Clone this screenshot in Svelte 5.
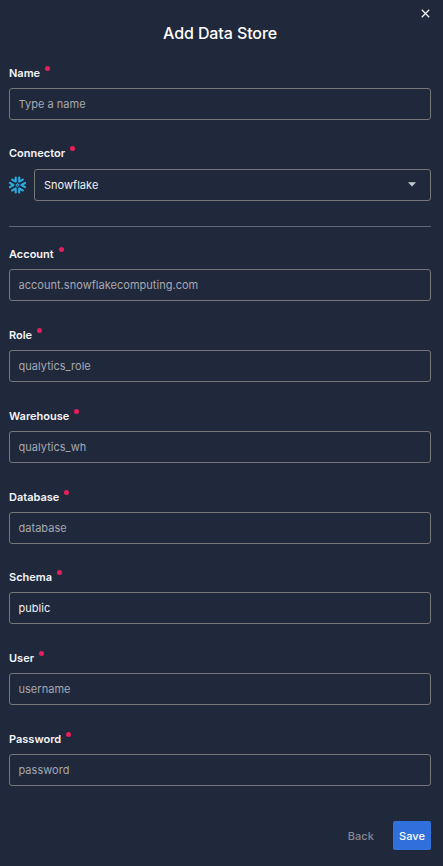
<script>
  const fields = [
    { label: 'Account', placeholder: 'account.snowflakecomputing.com', value: '' },
    { label: 'Role', placeholder: 'qualytics_role', value: '' },
    { label: 'Warehouse', placeholder: 'qualytics_wh', value: '' },
    { label: 'Database', placeholder: 'database', value: '' },
    { label: 'Schema', placeholder: 'schema', value: 'public' },
    { label: 'User', placeholder: 'username', value: '' },
    { label: 'Password', placeholder: 'password', value: '' }
  ];
</script>

{#snippet field(f)}
  <label class="field">
    <span class="label">{f.label}<i class="dot"></i></span>
    <input class="control" type="text" placeholder={f.placeholder} value={f.value} />
  </label>
{/snippet}

<form class="dialog">
  <header>
    <button class="close" type="button" aria-label="Close">
      <svg width="9" height="9" viewBox="0 0 9 9"><path d="M.8.8l7.4 7.4M8.2.8L.8 8.2" stroke="#f4f5f8" stroke-width="1.25" fill="none" /></svg>
    </button>
    <h1>Add Data Store</h1>
  </header>

  {@render field({ label: 'Name', placeholder: 'Type a name', value: '' })}

  <div class="field connector">
    <span class="label">Connector<i class="dot"></i></span>
    <div class="row">
      <svg class="flake" width="17" height="18" viewBox="0 0 44 44">
        <path fill="#29abe2" d="M37.26 33.64 27.94 28.27a2.9 2.9 0 0 0-4.3 2.5V41.3a2.75 2.75 0 0 0 5.5 0V35.6l5.35 3.09a2.9 2.9 0 0 0 2.77-5.05M14.45 22.05a2.9 2.9 0 0 0-1.43-2.5L3.7 14.16a2.87 2.87 0 0 0-3.87 1.07 2.8 2.8 0 0 0 1.03 3.84l5.15 2.95-5.15 2.96a2.8 2.8 0 1 0 2.8 4.9l9.32-5.35a2.9 2.9 0 0 0 1.47-2.48M6.56 10.48l9.32 5.37a2.9 2.9 0 0 0 4.3-2.5V2.8a2.8 2.8 0 0 0-5.6 0V8.5L9.36 5.5a2.86 2.86 0 0 0-2.8 4.98M27.94 15.85l9.32-5.37a2.86 2.86 0 0 0-2.8-4.98L29.14 8.5V2.8a2.75 2.75 0 0 0-5.5 0V13.35a2.9 2.9 0 0 0 4.3 2.5M15.88 28.27 6.56 33.64a2.86 2.86 0 0 0 2.8 4.98L14.58 35.6V41.3a2.8 2.8 0 0 0 5.6 0V30.77a2.9 2.9 0 0 0-4.3-2.5M42.96 25 37.8 22.05 42.96 19.1a2.8 2.8 0 1 0-2.8-4.94L30.82 19.55a2.87 2.87 0 0 0 0 4.98L40.15 29.9A2.84 2.84 0 0 0 42.96 25" />
        <path fill="none" stroke="#29abe2" stroke-width="2.6" stroke-linejoin="round" d="M21.9 18.2 25.8 22.1 21.9 26 18 22.1Z" />
      </svg>
      <button class="control select" type="button">
        <span>Snowflake</span>
        <svg width="8" height="5" viewBox="0 0 8 5"><path d="M0 .3H8L4 4.5Z" fill="#c5c8cf" /></svg>
      </button>
    </div>
  </div>

  <hr />

  {#each fields as f}
    {@render field(f)}
  {/each}

  <footer>
    <button class="back" type="button">Back</button>
    <button class="save" type="button">Save</button>
  </footer>
</form>

<style>
  :global(body) {
    margin: 0;
    background: #20283c;
  }
  .dialog {
    box-sizing: border-box;
    width: 443px;
    height: 866px;
    padding: 0 12px 0 9px;
    overflow: hidden;
    display: flex;
    flex-direction: column;
    background: #20283c;
    color: #f4f5f8;
    font-family: Inter, 'Liberation Sans', sans-serif;
  }
  button {
    font: inherit;
    border: 0;
    padding: 0;
    background: none;
    color: inherit;
  }
  header {
    height: 66px;
    flex: none;
    display: flex;
    flex-direction: column;
    box-sizing: border-box;
    padding-top: 8px;
  }
  .close {
    align-self: flex-end;
    width: 11px;
    height: 10px;
    display: flex;
    align-items: center;
    justify-content: center;
  }
  h1 {
    margin: 5px 0 0;
    font-size: 16px;
    line-height: 20px;
    font-weight: 500;
    letter-spacing: -0.1px;
    text-align: center;
    color: #fff;
  }
  .field {
    display: flex;
    flex-direction: column;
    flex: none;
    height: 80.8px;
  }
  .label {
    height: 22px;
    flex: none;
    display: flex;
    font-size: 11px;
    line-height: 14px;
    font-weight: 600;
    letter-spacing: 0;
  }
  .dot {
    width: 5px;
    height: 5px;
    margin: 0 0 0 5px;
    border-radius: 50%;
    background: #e81f5b;
  }
  .control {
    box-sizing: border-box;
    width: 100%;
    height: 32px;
    margin: 0;
    padding: 0 8.5px;
    border: 1px solid #77777a;
    border-radius: 3px;
    background: transparent;
    color: #f0f1f4;
    font-family: inherit;
    font-size: 11px;
    letter-spacing: 0.03px;
    outline: none;
  }
  .control::placeholder {
    color: #a6a9b1;
    opacity: 1;
  }
  .row {
    display: flex;
    align-items: center;
    gap: 8px;
  }
  .flake {
    flex: none;
    overflow: visible;
  }
  .select {
    display: flex;
    align-items: center;
    justify-content: space-between;
    padding: 0 14px 0 9px;
  }
  .connector {
    height: 79.2px;
    margin-top: -0.4px;
  }
  .connector .label {
    height: 22.4px;
  }
  hr {
    flex: none;
    width: 100%;
    height: 1px;
    margin: 0.4px 0 20.2px;
    border: 0;
    background: #626876;
  }
  footer {
    display: flex;
    justify-content: flex-end;
    margin-top: 7.8px;
    font-size: 11px;
    font-weight: 500;
  }
  .back {
    color: #858992;
    margin-right: 19px;
    padding-top: 1px;
    letter-spacing: 0.1px;
  }
  .save {
    width: 38px;
    height: 29px;
    padding-top: 1px;
    border-radius: 2px;
    background: #2f70dd;
    color: #fff;
    letter-spacing: 0.1px;
  }
</style>
